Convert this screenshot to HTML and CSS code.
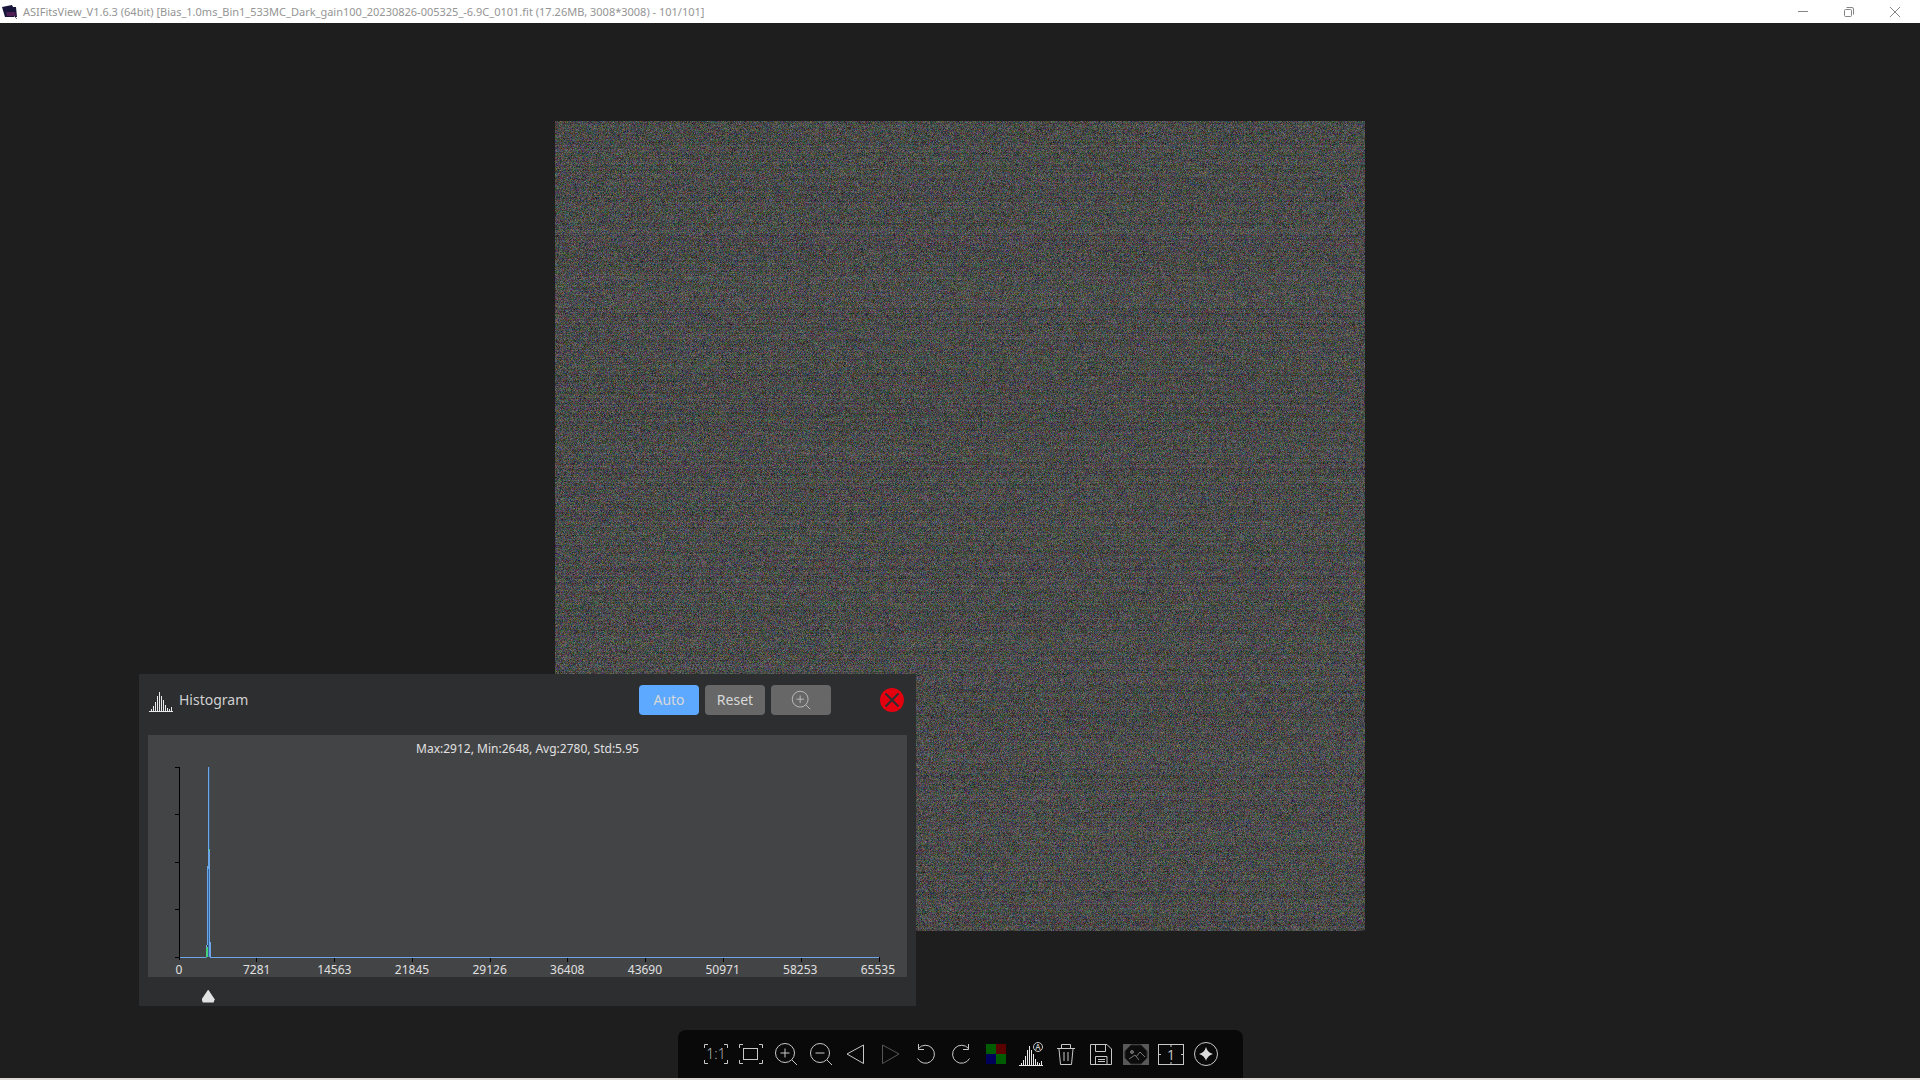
FILE: index.html
```html
<!DOCTYPE html>
<html lang="en">
<head>
    <meta charset="UTF-8">
    <meta name="viewport" content="width=device-width, initial-scale=1.0">
    <title>ASIFitsView</title>
    <link rel="stylesheet" href="styles.css">
</head>
<body>
    <header class="titlebar">
        <svg class="app-icon" viewBox="0 0 16 16">
            <path d="M0 3 L10 1 L11 3 L14 3 L15 13 L3 13 Z" fill="#17153a"/>
            <path d="M4 8 L13 8 L14 12 L5 12 Z" fill="#4d1f52"/>
            <path d="M12 12 L15 15" stroke="#777" stroke-width="1"/>
        </svg>
        <h1 class="title">ASIFitsView_V1.6.3 (64bit) [Bias_1.0ms_Bin1_533MC_Dark_gain100_20230826-005325_-6.9C_0101.fit (17.26MB, 3008*3008) - 101/101]</h1>
        <div class="window-buttons">
            <button aria-label="Minimize"><svg viewBox="0 0 12 12"><path d="M1 5.500H11"/></svg></button>
            <button aria-label="Restore"><svg viewBox="0 0 12 12"><rect x="1.5" y="3.5" width="7" height="7" rx="1"/><path d="M3.5 1.5H9Q10.500 1.500 10.500 3V8.500"/></svg></button>
            <button aria-label="Close"><svg viewBox="0 0 12 12"><path d="M1 1L11 11M11 1L1 11"/></svg></button>
        </div>
    </header>

    <main class="stage">
        <canvas class="frame" id="frame" width="810" height="810"></canvas>
    </main>

    <section class="histogram">
        <div class="histogram-head">
            <svg class="histogram-icon" viewBox="0 0 24 24"><use href="#bars"/></svg>
            <h2>Histogram</h2>
            <div class="histogram-actions">
                <button class="btn btn-auto">Auto</button>
                <button class="btn">Reset</button>
                <button class="btn" aria-label="Zoom histogram"><svg viewBox="0 0 24 24"><use href="#zoom-in"/></svg></button>
            </div>
            <button class="btn-close" aria-label="Close histogram"><svg viewBox="0 0 24 24"><circle cx="12" cy="12" r="12"/><path d="M5.500 5.500L18.500 18.500M18.500 5.500L5.500 18.500"/></svg></button>
        </div>
        <div class="chart">
            <p class="stats">Max:2912, Min:2648, Avg:2780, Std:5.95</p>
            <svg class="plot" viewBox="0 0 759 202">
                <path class="axis" d="M31.500 6V199M27 6.500H32M27 53.500H32M27 101.500H32M27 148.500H32M27 196.500H32"/>
                <path class="axis" d="M108.500 196V201M186.500 196V201M264.500 196V201M342.500 196V201M419.500 196V201M497.500 196V201M575.500 196V201M653.500 196V201M731.500 196V201"/>
                <path class="curve-green" d="M61.500 88V92"/>
                <path class="curve-dark" d="M61.500 6V88"/>
                <path class="curve-fill" d="M60.500 108V196"/>
                <path class="curve" d="M32 196.500H58.500M58.500 184V196M59.500 105V184M60.500 6V108M61.500 90V196M62.500 181V196M62 196.500H731"/>
                <path class="curve-green" d="M59.500 186V196M58.500 187V196"/>
            </svg>
            <ol class="ticks">
                <li>0</li><li>7281</li><li>14563</li><li>21845</li><li>29126</li><li>36408</li><li>43690</li><li>50971</li><li>58253</li><li>65535</li>
            </ol>
        </div>
        <input class="level" type="range" min="0" max="65535" value="2780" aria-label="Level">
    </section>

    <footer class="toolbar-row">
        <nav class="toolbar">
            <button aria-label="Actual size"><svg viewBox="0 0 24 24"><path d="M4 2.500H.5V6M20 2.500H23.500V6M.5 18V21.500H4M23.500 18V21.500H20"/><text x="12" y="17">1:1</text></svg></button>
            <button aria-label="Fit to window"><svg viewBox="0 0 24 24"><path d="M4 2.500H.5V6M20 2.500H23.500V6M.5 18V21.500H4M23.500 18V21.500H20"/><rect x="4.500" y="6.500" width="14" height="11"/></svg></button>
            <button aria-label="Zoom in"><svg viewBox="0 0 24 24"><g id="zoom-in"><circle cx="11" cy="11" r="9.500"/><path d="M6.500 11H15.500M11 6.500V15.500M18 18L23 23"/></g></svg></button>
            <button aria-label="Zoom out"><svg viewBox="0 0 24 24"><circle cx="11" cy="11" r="9.500"/><path d="M6.500 11H15.500M18 18L23 23"/></svg></button>
            <button aria-label="Previous"><svg viewBox="0 0 24 24"><path d="M3 12L19.500 3V21.500Z"/></svg></button>
            <button aria-label="Next" disabled><svg viewBox="0 0 24 24"><path d="M20 12L3.500 3V21.500Z"/></svg></button>
            <button aria-label="Rotate left"><svg viewBox="0 0 24 24"><g id="rotate"><path d="M4.500 6.500A9 9 0 1 1 3.500 16.500M4.500 2V7.500H10"/></g></svg></button>
            <button aria-label="Rotate right"><svg viewBox="0 0 24 24"><use href="#rotate" transform="translate(24 0) scale(-1 1)"/></svg></button>
            <button aria-label="Debayer"><svg viewBox="0 0 24 24" class="tiles"><path fill="#005c00" d="M2 2H12V12H2ZM12 12H22V22H12Z"/><path fill="#5a0000" d="M12 2H22V12H12Z"/><path fill="#00005a" d="M2 12H12V22H2Z"/></svg></button>
            <button aria-label="Auto stretch"><svg viewBox="0 0 24 24"><g id="bars" class="bars"><path d="M0 23.500H24M2.500 23V21M4.500 23V18M6.500 23V14M8.500 23V8M10.500 23V4M12.500 23V8M14.500 23V12M16.500 23V17M18.500 23V20M20.500 23V21M22.500 23V19"/></g><circle cx="19" cy="5" r="4.500"/><text class="mark" x="19" y="8">A</text></svg></button>
            <button aria-label="Delete"><svg viewBox="0 0 24 24"><path d="M3 6.500H21M7.500 6V2.500H16.500V6M5 7L6.500 22.500H17.500L19 7M10 10V19M14 10V19"/></svg></button>
            <button aria-label="Save"><svg viewBox="0 0 24 24"><path d="M1.500 2.500H18L22.500 7V22.500H1.500ZM6.500 3V9.500H16.500V3M6.500 22V14.500H18V22M9 17.500H16M9 19.500H16"/></svg></button>
            <button aria-label="Background"><svg viewBox="0 0 26 24" class="photo"><rect x="0" y="2" width="26" height="21"/><path class="shade" d="M8 3H18L24 9V16L18 22H8L2 16V9Z"/><circle cx="9" cy="10" r="1.500"/><path d="M6 17L12 13L16 18M13 15L17 10L22 15"/></svg></button>
            <button aria-label="Single frame"><svg viewBox="0 0 26 24"><rect x=".5" y="2.500" width="25" height="20"/><path d="M0 12.500H3M23 12.500H26M13 2V5M13 20V23"/><text class="number" x="13" y="18">1</text></svg></button>
            <button aria-label="Star tool"><svg viewBox="0 0 24 24"><circle cx="12" cy="12" r="11.500"/><path class="solid" d="M12 5Q13.500 10.500 19 12Q13.500 13.500 12 19Q10.500 13.500 5 12Q10.500 10.500 12 5Z"/></svg></button>
        </nav>
    </footer>

    <script src="script.js"></script>
</body>
</html>
```

FILE: styles.css
```css
* {
    box-sizing: border-box;
}
body {
    margin: 0;
    height: 100vh;
    display: flex;
    flex-direction: column;
    background-color: #1e1e1e;
    border-bottom: 2px solid #dedbd8;
    font-family: "Noto Sans", sans-serif;
    overflow: hidden;
}
h1, h2, p, ol {
    margin: 0;
    padding: 0;
    font-weight: normal;
}
button {
    padding: 0;
    border: none;
    background: none;
    font-family: inherit;
    cursor: pointer;
}
svg {
    display: block;
    fill: none;
    stroke: #c8c8c8;
}

/* title bar */
.titlebar {
    display: flex;
    align-items: center;
    height: 23px;
    padding-left: 2px;
    background-color: #fff;
}
.app-icon {
    width: 16px;
    height: 16px;
    stroke: none;
}
.title {
    flex: 1;
    padding-left: 5px;
    font-size: 11px;
    line-height: 22px;
    color: #959595;
    white-space: nowrap;
}
.window-buttons {
    display: flex;
    padding-right: 2px;
}
.window-buttons button {
    width: 46px;
    height: 20px;
    display: grid;
    place-items: center;
}
.window-buttons svg {
    width: 12px;
    height: 12px;
    stroke: #858585;
}

/* image area */
.stage {
    flex: 1;
    display: flex;
    justify-content: center;
    align-items: center;
    padding-bottom: 2px;
}
.frame {
    width: 75vh;
    height: 75vh;
    background-color: #4a4a4c;
}

/* floating histogram window */
.histogram {
    position: absolute;
    left: 139px;
    bottom: 74px;
    width: 777px;
    padding: 0 9px;
    background-color: #2d2e30;
}
.histogram-head {
    display: flex;
    align-items: center;
    height: 61px;
    padding: 0 3px 9px 1px;
}
.histogram-icon {
    width: 24px;
    height: 24px;
}
.histogram-head h2 {
    flex: 1;
    padding: 0 0 2px 6px;
    font-size: 14px;
    color: #d0d0d0;
}
.histogram-actions {
    display: flex;
    gap: 6px;
    margin-right: 49px;
}
.btn {
    display: grid;
    place-items: center;
    width: 60px;
    height: 30px;
    border-radius: 4px;
    background-color: #676767;
    color: #d8d8d8;
    font-size: 14px;
    line-height: 28px;
}
.btn svg {
    width: 20px;
    height: 20px;
}
.btn-auto {
    background-color: #5ca9ff;
}
.btn-close svg {
    width: 24px;
    height: 24px;
    fill: #e3000f;
    stroke: none;
}
.btn-close path {
    stroke: #2d2e30;
    stroke-width: 2;
}
.chart {
    height: 242px;
    background-color: #434446;
    font-size: 12px;
    color: #e0e0e0;
}
.stats {
    height: 26px;
    line-height: 27px;
    text-align: center;
}
.plot {
    width: 759px;
    height: 202px;
}
.axis {
    stroke: #000;
}
.curve {
    stroke: #6ba6e8;
}
.curve-fill {
    stroke: #33619c;
}
.curve-dark {
    stroke: #3a5878;
}
.curve-green {
    stroke: #45d07c;
}
.ticks {
    display: flex;
    justify-content: space-between;
    padding: 0 7px 0 9px;
    list-style: none;
    line-height: 14px;
}
.ticks li {
    width: 44px;
    text-align: center;
}
.level {
    display: block;
    appearance: none;
    width: 713px;
    height: 29px;
    margin: 0 0 0 24px;
    padding-top: 9px;
    background: none;
}
.level::-webkit-slider-thumb {
    appearance: none;
    width: 13px;
    height: 13px;
    background-color: #e2e2e2;
    clip-path: polygon(50% 0, 100% 75%, 92% 100%, 8% 100%, 0 75%);
}

/* bottom toolbar */
.toolbar-row {
    display: flex;
    justify-content: center;
}
.toolbar {
    display: flex;
    align-items: center;
    height: 48px;
    padding: 0 19px 0 21px;
    border-radius: 8px 8px 0 0;
    background-color: #090909;
}
.toolbar button {
    display: grid;
    place-items: center;
    width: 35px;
    height: 48px;
}
.toolbar button:disabled {
    opacity: 0.4;
}
.toolbar svg {
    height: 24px;
}
.toolbar text {
    fill: #c8c8c8;
    stroke: none;
    font-family: "Open Sans", sans-serif;
    font-size: 14px;
    font-weight: 300;
    text-anchor: middle;
}
.toolbar .mark {
    font-size: 8px;
    font-weight: 600;
}
.toolbar .number {
    font-weight: 400;
}
.bars {
    stroke: #e8e8e8;
}
.tiles {
    stroke: none;
}
.photo {
    fill: #585858;
    stroke: #777;
}
.photo rect {
    stroke: none;
}
.photo path {
    fill: none;
}
.photo .shade {
    fill: #0c0c0c;
    stroke: #2a2a2a;
}
.solid {
    fill: #dcdcdc;
    stroke: none;
}
```

FILE: script.js
```js
// Draws the bias frame: sensor noise per pixel plus a faint offset per row
const canvas = document.getElementById("frame");
const ctx = canvas.getContext("2d");
const image = ctx.createImageData(canvas.width, canvas.height);

let seed = 101;
function random() {
    seed = (seed * 1664525 + 1013904223) % 4294967296;
    return seed / 4294967296;
}

function noise(amount) {
    return (random() + random() + random() - 1.5) * amount;
}

for (let y = 0; y < canvas.height; y++) {
    const row = noise(6);
    const tint = noise(3);
    for (let x = 0; x < canvas.width; x++) {
        const i = (y * canvas.width + x) * 4;
        const light = 74 + row + noise(22);
        image.data[i] = light + tint + noise(38);
        image.data[i + 1] = light + 1 - tint + noise(30);
        image.data[i + 2] = light + tint + noise(40);
        image.data[i + 3] = 255;
    }
}
ctx.putImageData(image, 0, 0);
```
